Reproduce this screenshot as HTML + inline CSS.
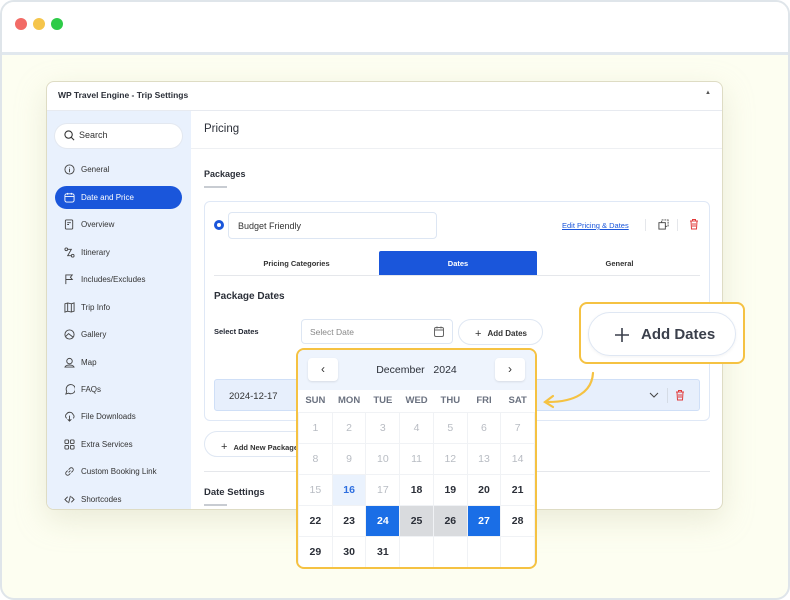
<!DOCTYPE html>
<html><head><meta charset="utf-8"><style>
*{box-sizing:border-box;margin:0;padding:0}
body{width:790px;height:600px;font-family:"Liberation Sans",Arial,sans-serif;background:#fff;position:relative;overflow:hidden;color:#1f2430}
.frame{position:absolute;left:0;top:0;width:790px;height:600px;border:2px solid #dfe5ea;border-radius:14px;background:#fdfef1;overflow:hidden}
.top{position:absolute;left:0;top:0;width:100%;height:53px;background:#fff;border-bottom:3px solid #e1e8ee}
.dot{position:absolute;top:16px;width:12px;height:12px;border-radius:50%}
.win{position:absolute;left:44px;top:79px;width:677px;height:429px;background:#fff;border:1px solid #dedcc4;border-radius:8px;overflow:hidden;box-shadow:0 10px 30px rgba(200,200,170,.35)}
.title{height:29px;border-bottom:1px solid #e7eaf0;font-size:8.5px;font-weight:bold;padding:8px 11px;color:#2b2f38}
.side{position:absolute;left:0;top:29px;width:144px;bottom:0;background:#e9f1fd}
.search{position:absolute;left:8px;top:13px;width:127px;height:24px;background:#fff;border-radius:12px;font-size:9px;color:#333;padding:6px 0 0 24px;box-shadow:0 0 0 1px #e3e8f0}
.item{position:absolute;left:8px;width:127px;height:23px;font-size:8px;color:#333;padding:7px 0 0 26px;border-radius:12px}
.item svg{position:absolute;left:9px;top:6px}
.item.act{background:#1a56db;color:#fff}
.main{position:absolute;left:144px;top:29px;right:0;bottom:0}
h2{position:absolute;font-size:11.5px;font-weight:normal;color:#2b2f38}
.bold{font-weight:bold}
.ul{position:absolute;width:23px;height:2px;background:#c8ccd2}
.card{position:absolute;left:13px;top:90px;width:506px;height:220px;border:1px solid #dfe8f6;border-radius:6px}
.input{position:absolute;border:1px solid #dde6f3;border-radius:4px;background:#fff;font-size:9px}
.tab{position:absolute;top:140px;height:24px;font-size:7.5px;font-weight:bold;text-align:center;padding-top:8px;color:#333}
.btn{position:absolute;border:1px solid #dfe7f3;border-radius:14px;background:#fff;font-size:8px;font-weight:bold;color:#333}
.cal{position:absolute;left:294px;top:346px;width:241px;height:221px;border:2px solid #f5c242;border-radius:8px;background:#fff;overflow:hidden}
.calh{height:40px;background:#eef4fd;position:relative}
.nav{position:absolute;top:8px;width:30px;height:23px;background:#fff;border-radius:4px;box-shadow:0 1px 2px rgba(0,0,0,.1);text-align:center;font-size:12px;padding-top:4px;color:#333}
table{border-collapse:collapse;width:237px}
td{width:34px;height:31px;text-align:center;font-size:10.5px;font-weight:bold;color:#2b2f38;border:1px solid #f0f2f5}
th{height:22px;font-size:9.5px;font-weight:bold;color:#6b7280;border:none}
td.g{color:#b8bcc3;font-weight:normal}
td.b{background:#1a6ee6;color:#fff}
td.s{background:#d9dbde}
td.t{background:#eaf2fd;color:#2e6fe0}
.call{position:absolute;left:577px;top:300px;width:166px;height:62px;border:2px solid #f5c242;border-radius:8px;background:#fff}
.pill{position:absolute;left:7px;top:8px;width:148px;height:44px;border:1px solid #dfe7f3;border-radius:22px;font-size:15px;font-weight:bold;color:#3a3f4b;padding:13px 0 0 52px;box-shadow:0 1px 3px rgba(0,0,0,.05)}
</style></head><body>
<div class="frame">
<div class="top"><span class="dot" style="left:13px;background:#f26b66"></span><span class="dot" style="left:31px;background:#f5c54b"></span><span class="dot" style="left:49px;background:#2ecb48"></span></div>
<div class="win">
<div class="title">WP Travel Engine - Trip Settings<span style="float:right;font-size:6px;color:#555">▲</span></div>
<div class="side">
<div class="search"><svg style="position:absolute;left:9px;top:6px" width="11" height="11" viewBox="0 0 12 12"><circle cx="5" cy="5" r="4" fill="none" stroke="#333" stroke-width="1.2"/><path d="M8 8l3 3" stroke="#333" stroke-width="1.2"/></svg>Search</div>
<div class="item" style="top:47px"><svg width="11" height="11" viewBox="0 0 12 12"><circle cx="6" cy="6" r="5" fill="none" stroke="#444"/><path d="M6 5v4M6 3.3v.5" stroke="#444"/></svg>General</div>
<div class="item act" style="top:75px"><svg width="11" height="11" viewBox="0 0 12 12"><rect x="1" y="2" width="10" height="9" rx="2" fill="none" stroke="#fff"/><path d="M1 5h10M4 1v2M8 1v2" stroke="#fff"/></svg>Date and Price</div>
<div class="item" style="top:102px"><svg width="11" height="11" viewBox="0 0 12 12"><rect x="1.5" y="1" width="8" height="10" rx="1" fill="none" stroke="#444"/><path d="M3.5 4h4M3.5 6h2" stroke="#444"/></svg>Overview</div>
<div class="item" style="top:130px"><svg width="11" height="11" viewBox="0 0 12 12"><circle cx="2.5" cy="2.5" r="1.5" fill="none" stroke="#444"/><circle cx="9.5" cy="9.5" r="1.5" fill="none" stroke="#444"/><path d="M4 2.5h4l-4 7h4" fill="none" stroke="#444"/></svg>Itinerary</div>
<div class="item" style="top:157px"><svg width="11" height="11" viewBox="0 0 12 12"><path d="M2 11V1h7l-2 2.5L9 6H2" fill="none" stroke="#444"/></svg>Includes/Excludes</div>
<div class="item" style="top:185px"><svg width="11" height="11" viewBox="0 0 12 12"><path d="M1 2l3-1 4 1 3-1v9l-3 1-4-1-3 1zM4 1v9M8 2v9" fill="none" stroke="#444"/></svg>Trip Info</div>
<div class="item" style="top:212px"><svg width="11" height="11" viewBox="0 0 12 12"><circle cx="6" cy="6" r="5" fill="none" stroke="#444"/><path d="M2 8l3-3 5 4" fill="none" stroke="#444"/></svg>Gallery</div>
<div class="item" style="top:240px"><svg width="11" height="11" viewBox="0 0 12 12"><circle cx="6" cy="4.5" r="3" fill="none" stroke="#444"/><path d="M1 11c1-3 9-3 10 0z" fill="none" stroke="#444"/></svg>Map</div>
<div class="item" style="top:267px"><svg width="11" height="11" viewBox="0 0 12 12"><path d="M2 11l1-3a5 5 0 1 1 2 2z" fill="none" stroke="#444"/></svg>FAQs</div>
<div class="item" style="top:294px"><svg width="11" height="11" viewBox="0 0 12 12"><path d="M3 8a3 3 0 0 1 0-5 4 4 0 0 1 7 1 2.5 2.5 0 0 1 0 4M6 5v6M4 9l2 2 2-2" fill="none" stroke="#444"/></svg>File Downloads</div>
<div class="item" style="top:322px"><svg width="11" height="11" viewBox="0 0 12 12"><rect x="1" y="1" width="4" height="4" rx="1" fill="none" stroke="#444"/><rect x="7" y="1" width="4" height="4" rx="1" fill="none" stroke="#444"/><rect x="1" y="7" width="4" height="4" rx="1" fill="none" stroke="#444"/><rect x="7" y="7" width="4" height="4" rx="1" fill="none" stroke="#444"/></svg>Extra Services</div>
<div class="item" style="top:349px"><svg width="11" height="11" viewBox="0 0 12 12"><path d="M5 7l2-2M4 5L2.5 6.5a2 2 0 0 0 3 3L7 8M8 7l1.5-1.5a2 2 0 0 0-3-3L5 4" fill="none" stroke="#444"/></svg>Custom Booking Link</div>
<div class="item" style="top:377px"><svg width="11" height="11" viewBox="0 0 12 12"><path d="M4 3L1 6l3 3M8 3l3 3-3 3M7 2L5 10" fill="none" stroke="#444"/></svg>Shortcodes</div>
</div>
<div class="main">
<div style="position:absolute;left:0;right:0;top:0;height:38px;border-bottom:1px solid #eef0f3"></div>
<h2 style="left:13px;top:12px">Pricing</h2>
<h2 class="bold" style="left:13px;top:58px;font-size:9px">Packages</h2><div class="ul" style="left:13px;top:75px"></div>
<div class="card">
<div style="position:absolute;left:9px;top:18px;width:10px;height:10px;border-radius:50%;border:3px solid #1a56db"></div>
<div class="input" style="left:23px;top:10px;width:209px;height:27px;padding:8px 9px;color:#333">Budget Friendly</div>
<div style="position:absolute;left:357px;top:19px;font-size:7.5px;color:#1a56db;text-decoration:underline">Edit Pricing &amp; Dates</div>
<div style="position:absolute;left:440px;top:17px;width:1px;height:12px;background:#e5e7eb"></div>
<svg style="position:absolute;left:453px;top:17px" width="11" height="11" viewBox="0 0 12 12"><rect x="1" y="4" width="7" height="7" fill="none" stroke="#444"/><path d="M4 4V1h7v7H8" fill="none" stroke="#444" stroke-dasharray="2 1"/></svg>
<div style="position:absolute;left:472px;top:17px;width:1px;height:12px;background:#e5e7eb"></div>
<svg style="position:absolute;left:484px;top:16px" width="10" height="12" viewBox="0 0 10 12"><path d="M1 3h8M3.5 3V1.5h3V3M2 3l.5 8h5L8 3M4 5v4M6 5v4" fill="none" stroke="#e23b3b"/></svg>
<div style="position:absolute;left:9px;top:73px;width:486px;height:1px;background:#e5e7eb"></div>
<div class="tab" style="left:9px;top:49px;width:165px">Pricing Categories</div>
<div class="tab" style="left:174px;top:49px;width:158px;background:#1a56db;color:#fff;border-radius:2px 2px 0 0">Dates</div>
<div class="tab" style="left:332px;top:49px;width:165px">General</div>
<div style="position:absolute;left:9px;top:89px;font-size:10px;font-weight:bold;color:#2b2f38">Package Dates</div>
<div style="position:absolute;left:9px;top:125px;font-size:7.5px;font-weight:bold">Select Dates</div>
<div class="input" style="left:96px;top:117px;width:152px;height:25px;padding:7px 8px;font-size:8.5px;color:#888">Select Date<svg style="position:absolute;right:8px;top:6px" width="10" height="11" viewBox="0 0 10 11"><rect x=".5" y="1.5" width="9" height="9" rx="1.5" fill="none" stroke="#666"/><path d="M.5 4h9M3 .5v2M7 .5v2" stroke="#666"/></svg></div>
<div class="btn" style="left:253px;top:117px;width:85px;height:26px;padding:8px 0 0 16px"><span style="font-weight:normal;font-size:11px;margin-right:6px;vertical-align:-1px">+</span>Add Dates</div>
<div style="position:absolute;left:9px;top:177px;width:486px;height:32px;background:#e7effc;border:1px solid #cfdff7;border-radius:3px;font-size:9.5px;padding:11px 14px;color:#333">2024-12-17
<svg style="position:absolute;left:434px;top:12px" width="10" height="7" viewBox="0 0 10 7"><path d="M1 1l4 4 4-4" fill="none" stroke="#444"/></svg>
<div style="position:absolute;left:452px;top:8px;width:1px;height:15px;background:#d5dce6"></div>
<svg style="position:absolute;left:460px;top:9px" width="10" height="12" viewBox="0 0 10 12"><path d="M1 3h8M3.5 3V1.5h3V3M2 3l.5 8h5L8 3M4 5v4M6 5v4" fill="none" stroke="#e23b3b"/></svg></div>
</div>
<div class="btn" style="left:13px;top:320px;width:110px;height:26px;padding:9px 0 0 16px;font-size:7.5px"><span style="font-weight:normal;font-size:11px;margin-right:6px">+</span>Add New Package</div>
<div style="position:absolute;left:13px;top:360px;width:506px;height:1px;background:#e5e7eb"></div>
<h2 class="bold" style="left:13px;top:376px;font-size:9.5px">Date Settings</h2><div class="ul" style="left:13px;top:393px"></div>
</div>
</div>
<svg style="position:absolute;left:538px;top:368px" width="60" height="40" viewBox="0 0 60 40"><path d="M53 3C52 22 35 32 8 32" fill="none" stroke="#f5c242" stroke-width="2.2" stroke-linecap="round"/><path d="M13 26L5 32l8 5" fill="none" stroke="#f5c242" stroke-width="2.2" stroke-linecap="round"/></svg>
<div class="cal">
<div class="calh"><div class="nav" style="left:10px">‹</div><div style="position:absolute;left:0;right:0;top:14px;text-align:center;font-size:10.5px;color:#2b2f38">December&nbsp;&nbsp; 2024</div><div class="nav" style="left:197px">›</div></div>
<table>
<tr><th>SUN</th><th>MON</th><th>TUE</th><th>WED</th><th>THU</th><th>FRI</th><th>SAT</th></tr>
<tr><td class="g">1</td><td class="g">2</td><td class="g">3</td><td class="g">4</td><td class="g">5</td><td class="g">6</td><td class="g">7</td></tr>
<tr><td class="g">8</td><td class="g">9</td><td class="g">10</td><td class="g">11</td><td class="g">12</td><td class="g">13</td><td class="g">14</td></tr>
<tr><td class="g">15</td><td class="t">16</td><td class="g">17</td><td>18</td><td>19</td><td>20</td><td>21</td></tr>
<tr><td>22</td><td>23</td><td class="b">24</td><td class="s">25</td><td class="s">26</td><td class="b">27</td><td>28</td></tr>
<tr><td>29</td><td>30</td><td>31</td><td></td><td></td><td></td><td></td></tr>
</table>
</div>
<div class="call"><div class="pill"><svg style="position:absolute;left:26px;top:15px" width="14" height="14" viewBox="0 0 14 14"><path d="M7 0v14M0 7h14" stroke="#3a3f4b" stroke-width="1.6"/></svg>Add Dates</div></div>
</div>
</body></html>
